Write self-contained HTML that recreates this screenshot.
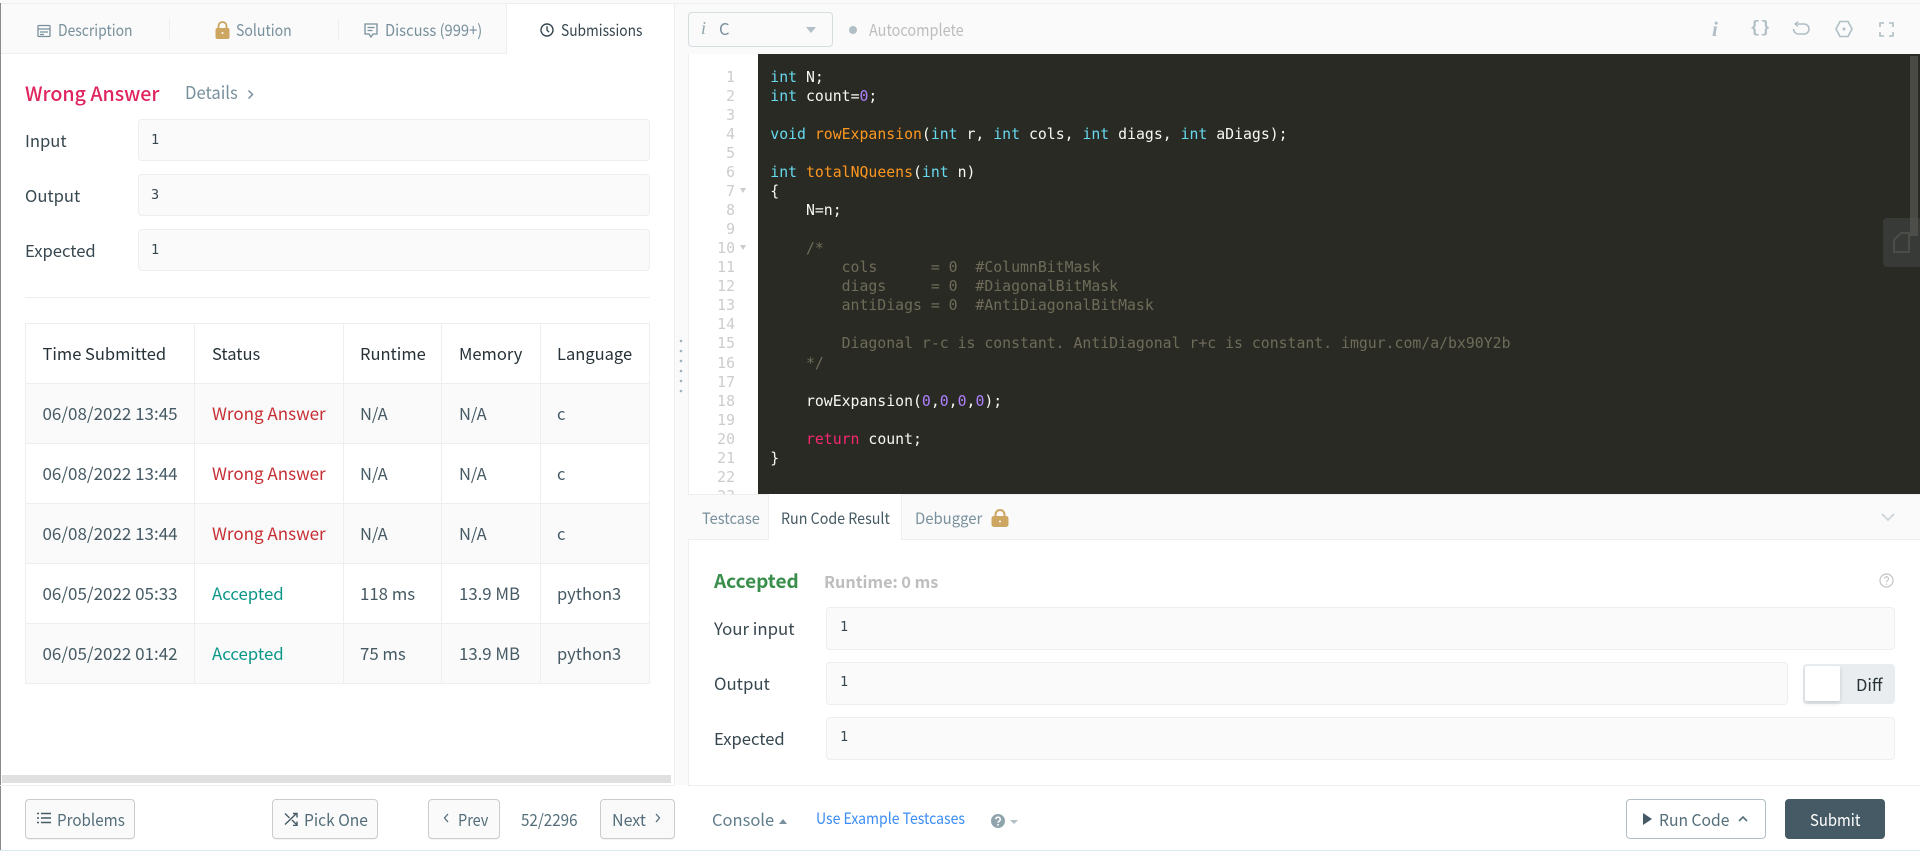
<!DOCTYPE html>
<html><head><meta charset="utf-8"><style>
html,body{margin:0;padding:0;width:1920px;height:851px;overflow:hidden;background:#fff}
body{position:relative;font-family:"Noto Sans CJK SC","Liberation Sans",sans-serif;font-size:16.5px;color:#37474f}
div,span.t,svg,pre{position:absolute}
.t{position:absolute;white-space:nowrap;line-height:24px;height:24px;transform-origin:left center}
.box{position:absolute;background:#fafafa;border:1px solid #eee;border-radius:4px;box-sizing:border-box}
.m{font-family:"DejaVu Sans Mono",monospace;font-size:13.5px;color:#37474f}
.btn{position:absolute;background:#fafafa;border:1px solid #ccc;border-radius:4px;box-sizing:border-box;top:799px;height:40px;box-shadow:0 1px 1px rgba(0,0,0,.05)}
.h{background:#eee;position:absolute}
pre{margin:0;font-family:"DejaVu Sans Mono",monospace;font-size:14.8px;line-height:19.04px;color:#f8f8f2}
.k{color:#66d9ef}.f{color:#fd971f}.n{color:#ae81ff}.r{color:#f92672}.c{color:#6e6c59}
.th{color:#263238}.td{color:#455a64;font-size:17px}.wa{color:#c62f35;font-size:17px}.ac{color:#0a9687;font-size:16.8px}
.na{font-size:16.5px}
</style></head><body>
<!-- backgrounds -->
<div style="left:0;top:0;width:1920px;height:4px;background:#fafafa;border-bottom:1px solid #eee;box-sizing:border-box"></div>
<div style="left:0;top:3px;width:1px;height:847px;background:#8a8a8a"></div>
<div style="left:675px;top:4px;width:13px;height:781px;background:#fafafa"></div>
<div class="h" style="left:674px;top:4px;width:1px;height:781px"></div>
<div class="h" style="left:0;top:785px;width:675px;height:1px"></div>
<div style="left:0;top:850px;width:1920px;height:1px;background:#d8ebf2"></div>

<!-- left tabs -->
<div style="left:1px;top:4px;width:506px;height:50px;background:#fafafa;border-bottom:1px solid #eee;border-right:1px solid #eee;box-sizing:border-box"></div>
<div class="h" style="left:169px;top:19px;width:1px;height:20px"></div>
<div class="h" style="left:338px;top:19px;width:1px;height:20px"></div>
<svg style="left:37px;top:24px" width="14" height="14" viewBox="0 0 14 14" fill="none" stroke="#78909c" stroke-width="1.3"><rect x="1" y="1.5" width="12" height="11" rx="1"/><path d="M1 5h12M3 8h8M3 10.5h4"/></svg>
<span class="t" style="left:58px;top:17px;color:#78909c;font-size:16px;transform:scaleX(.87)">Description</span>
<svg style="left:215px;top:21px" width="15" height="18" viewBox="0 0 15 18"><path d="M3.5 8V5a4 4 0 0 1 8 0v3" fill="none" stroke="#c9a45f" stroke-width="1.8"/><rect x=".5" y="7" width="14" height="11" rx="2" fill="#cda661"/><circle cx="7.5" cy="12" r="1" fill="#fff"/></svg>
<span class="t" style="left:236px;top:17px;color:#78909c;font-size:16px;transform:scaleX(.88)">Solution</span>
<svg style="left:364px;top:23px" width="14" height="16" viewBox="0 0 14 16" fill="none" stroke="#78909c" stroke-width="1.3"><path d="M1 1h12v10H9l-2 3-2-3H1z"/><path d="M3.5 4.5h7M3.5 7.5h5"/></svg>
<span class="t" style="left:385px;top:17px;color:#78909c;font-size:16px;transform:scaleX(.92)">Discuss (999+)</span>
<svg style="left:540px;top:23px" width="14" height="14" viewBox="0 0 14 14" fill="none" stroke="#37474f" stroke-width="1.4"><circle cx="7" cy="7" r="6"/><path d="M7 3.2V7l2 2.2"/></svg>
<span class="t" style="left:561px;top:17px;color:#37474f;font-size:16px;transform:scaleX(.86)">Submissions</span>

<!-- result -->
<span class="t" style="left:25px;top:81px;color:#e0245e;font-weight:500;font-size:19.6px">Wrong Answer</span>
<span class="t" style="left:185px;top:81px;color:#78909c;font-size:17.5px;transform:scaleX(.95)">Details</span>
<svg style="left:247px;top:89px" width="7" height="11" viewBox="0 0 7 11" fill="none" stroke="#78909c" stroke-width="1.5"><path d="M1.5 1.5l4 4-4 4"/></svg>
<span class="t" style="left:25px;top:128px;font-size:16.6px">Input</span>
<span class="t" style="left:25px;top:183px;font-size:16.6px">Output</span>
<span class="t" style="left:25px;top:238px;font-size:16.6px">Expected</span>
<div class="box" style="left:138px;top:119px;width:512px;height:42px"></div>
<div class="box" style="left:138px;top:174px;width:512px;height:42px"></div>
<div class="box" style="left:138px;top:229px;width:512px;height:42px"></div>
<span class="t m" style="left:151px;top:128px">1</span>
<span class="t m" style="left:151px;top:183px">3</span>
<span class="t m" style="left:151px;top:238px">1</span>
<div class="h" style="left:25px;top:297px;width:625px;height:1px"></div>

<!-- table -->
<div style="left:25px;top:383px;width:625px;height:60px;background:#fafafa"></div>
<div style="left:25px;top:503px;width:625px;height:60px;background:#fafafa"></div>
<div style="left:25px;top:623px;width:625px;height:60px;background:#fafafa"></div>
<div class="h" style="left:25px;top:323px;width:625px;height:1px"></div>
<div class="h" style="left:25px;top:383px;width:625px;height:1px"></div>
<div class="h" style="left:25px;top:443px;width:625px;height:1px"></div>
<div class="h" style="left:25px;top:503px;width:625px;height:1px"></div>
<div class="h" style="left:25px;top:563px;width:625px;height:1px"></div>
<div class="h" style="left:25px;top:623px;width:625px;height:1px"></div>
<div class="h" style="left:25px;top:683px;width:625px;height:1px"></div>
<div class="h" style="left:25px;top:323px;width:1px;height:361px"></div>
<div class="h" style="left:194px;top:323px;width:1px;height:361px"></div>
<div class="h" style="left:343px;top:323px;width:1px;height:361px"></div>
<div class="h" style="left:441px;top:323px;width:1px;height:361px"></div>
<div class="h" style="left:540px;top:323px;width:1px;height:361px"></div>
<div class="h" style="left:649px;top:323px;width:1px;height:361px"></div>

<span class="t th" style="left:42.500px;top:341px">Time Submitted</span><span class="t th" style="left:212px;top:341px">Status</span><span class="t th" style="left:360px;top:341px">Runtime</span><span class="t th" style="left:459px;top:341px">Memory</span><span class="t th" style="left:557px;top:341px">Language</span>

<span class="t td" style="left:42.500px;top:401px">06/08/2022 13:45</span><span class="t wa" style="left:212px;top:401px">Wrong Answer</span><span class="t td na" style="left:360px;top:401px">N/A</span><span class="t td na" style="left:459px;top:401px">N/A</span><span class="t td na" style="left:557px;top:401px">c</span>
<span class="t td" style="left:42.500px;top:461px">06/08/2022 13:44</span><span class="t wa" style="left:212px;top:461px">Wrong Answer</span><span class="t td na" style="left:360px;top:461px">N/A</span><span class="t td na" style="left:459px;top:461px">N/A</span><span class="t td na" style="left:557px;top:461px">c</span>
<span class="t td" style="left:42.500px;top:521px">06/08/2022 13:44</span><span class="t wa" style="left:212px;top:521px">Wrong Answer</span><span class="t td na" style="left:360px;top:521px">N/A</span><span class="t td na" style="left:459px;top:521px">N/A</span><span class="t td na" style="left:557px;top:521px">c</span>
<span class="t td" style="left:42.500px;top:581px">06/05/2022 05:33</span><span class="t ac" style="left:212px;top:581px">Accepted</span><span class="t td" style="left:360px;top:581px;font-size:16.800px">118 ms</span><span class="t td" style="left:459px;top:581px;font-size:16.800px">13.9 MB</span><span class="t td na" style="left:557px;top:581px">python3</span>
<span class="t td" style="left:42.500px;top:641px">06/05/2022 01:42</span><span class="t ac" style="left:212px;top:641px">Accepted</span><span class="t td" style="left:360px;top:641px;font-size:16.800px">75 ms</span><span class="t td" style="left:459px;top:641px;font-size:16.800px">13.9 MB</span><span class="t td na" style="left:557px;top:641px">python3</span>

<div style="left:2px;top:775px;width:669px;height:8px;background:#e0e0e0"></div>

<!-- left footer -->
<div class="btn" style="left:25px;width:110px"></div>
<svg style="left:37px;top:812px" width="14" height="12" viewBox="0 0 14 12" fill="none" stroke="#455a64" stroke-width="1.4"><path d="M0 1.5h2M0 6h2M0 10.5h2M4 1.5h10M4 6h10M4 10.5h10"/></svg>
<span class="t" style="left:57px;top:807px;color:#546e7a;transform:scaleX(.92)">Problems</span>
<div class="btn" style="left:272px;width:106px"></div>
<svg style="left:284px;top:812px" width="14" height="14" viewBox="0 0 14 14" fill="none" stroke="#455a64" stroke-width="1.4"><path d="M1 1.5l4.5 4.5M8 8l5 5M1 12.5L12.5 1.5M9 1.500h4v4M13 9.500v4H9"/></svg>
<span class="t" style="left:304px;top:807px;color:#546e7a;transform:scaleX(.945)">Pick One</span>
<div class="btn" style="left:428px;width:72px"></div>
<svg style="left:443px;top:813px" width="7" height="10" viewBox="0 0 7 10" fill="none" stroke="#546e7a" stroke-width="1.3"><path d="M5 1L1.500 5 5 9"/></svg>
<span class="t" style="left:458px;top:807px;color:#546e7a;transform:scaleX(.88)">Prev</span>
<span class="t" style="left:521px;top:807px;color:#546e7a;transform:scaleX(.92)">52/2296</span>
<div class="btn" style="left:600px;width:75px"></div>
<span class="t" style="left:612px;top:807px;color:#546e7a;transform:scaleX(.97)">Next</span>
<svg style="left:654px;top:813px" width="7" height="10" viewBox="0 0 7 10" fill="none" stroke="#546e7a" stroke-width="1.3"><path d="M2 1l3.500 4L2 9"/></svg>

<!-- drag dots -->
<svg style="left:679px;top:338px" width="5" height="56" fill="#9fb2bd"><circle cx="2" cy="3" r="1.3"/><circle cx="2" cy="13" r="1.3"/><circle cx="2" cy="23" r="1.3"/><circle cx="2" cy="33" r="1.3"/><circle cx="2" cy="43" r="1.3"/><circle cx="2" cy="53" r="1.3"/></svg>

<!-- editor toolbar -->
<div style="left:688px;top:4px;width:1232px;height:50px;background:#fafafa"></div>
<div style="left:688px;top:12px;width:145px;height:35px;border:1px solid #d5dde1;border-radius:4px;box-sizing:border-box"></div>
<span class="t" style="left:701px;top:16px;color:#90a4ae;font-family:'Liberation Serif',serif;font-style:italic;font-size:18px">i</span>
<span class="t" style="left:719px;top:16px;color:#78909c">C</span>
<div style="left:806px;top:27px;width:0;height:0;border:5px solid transparent;border-top:6px solid #b0bec5;border-bottom:0"></div>
<div style="left:849px;top:26px;width:8px;height:8px;border-radius:50%;background:#b0bec5"></div>
<span class="t" style="left:869px;top:17px;color:#bdbdbd;transform:scaleX(.875)">Autocomplete</span>
<span class="t" style="left:1712px;top:17px;color:#b0bec5;font-family:'Liberation Serif',serif;font-style:italic;font-size:21px;font-weight:700">i</span>
<span class="t" style="left:1750px;top:17px;color:#b0bec5;font-family:'Liberation Mono',monospace;font-size:17px;font-weight:700">{}</span>
<svg style="left:1792px;top:21px" width="18" height="16" viewBox="0 0 18 16" fill="none" stroke="#b0bec5" stroke-width="1.6"><path d="M3 3h9a5 5 0 0 1 0 10H6a5 5 0 0 1-4.500-5"/><path d="M6 .5L3 3l3 2.500" stroke-width="1.300"/></svg>
<svg style="left:1835px;top:20px" width="18" height="18" viewBox="0 0 18 18" fill="none" stroke="#b0bec5" stroke-width="1.6"><path d="M5 1.500h8l4 7.500-4 7.500H5L1 9z" stroke-linejoin="round"/><circle cx="9" cy="9" r="1.500" fill="#b0bec5" stroke="none"/></svg>
<svg style="left:1879px;top:22px" width="15" height="15" viewBox="0 0 15 15" fill="none" stroke="#b0bec5" stroke-width="1.600"><path d="M1 5V1h4M10 1h4v4M14 10v4h-4M5 14H1v-4"/></svg>

<!-- editor -->
<div style="left:688px;top:54px;width:70px;height:440px;background:#fff;overflow:hidden;border-left:1px solid #eee;box-sizing:border-box">
<pre style="left:0;top:13.800px;width:46px;text-align:right;color:#ccc">1
2
3
4
5
6
7
8
9
10
11
12
13
14
15
16
17
18
19
20
21
22
23</pre>
<div style="left:51px;top:134px;width:0;height:0;border:3px solid transparent;border-top:5px solid #ccc;border-bottom:0"></div>
<div style="left:51px;top:191px;width:0;height:0;border:3px solid transparent;border-top:5px solid #ccc;border-bottom:0"></div>
</div>
<div style="left:758px;top:54px;width:1162px;height:440px;background:#2a2a24;overflow:hidden">
<pre style="left:12.300px;top:13.800px;font-size:14.820px"><span class="k">int</span> N;
<span class="k">int</span> count=<span class="n">0</span>;

<span class="k">void</span> <span class="f">rowExpansion</span>(<span class="k">int</span> r, <span class="k">int</span> cols, <span class="k">int</span> diags, <span class="k">int</span> aDiags);

<span class="k">int</span> <span class="f">totalNQueens</span>(<span class="k">int</span> n)
{
    N=n;

    <span class="c">/*
        cols      = 0  #ColumnBitMask
        diags     = 0  #DiagonalBitMask
        antiDiags = 0  #AntiDiagonalBitMask

        Diagonal r-c is constant. AntiDiagonal r+c is constant. imgur.com/a/bx90Y2b
    */</span>

    rowExpansion(<span class="n">0</span>,<span class="n">0</span>,<span class="n">0</span>,<span class="n">0</span>);

    <span class="r">return</span> count;
}</pre>
<div style="left:1152px;top:2px;width:8px;height:180px;background:#4a4a45"></div>
<div style="left:1125px;top:164px;width:37px;height:49px;background:#383a37;border-radius:4px 0 0 4px"></div>
<div style="left:1152px;top:164px;width:8px;height:18px;background:#4d4e49"></div>
<svg style="left:1135px;top:178px" width="17" height="21" viewBox="0 0 17 21" fill="none" stroke="#4c4d49" stroke-width="2"><path d="M1 8l7-7h8v19H1z" stroke-linejoin="round"/></svg>
</div>

<!-- console tabs -->
<div style="left:688px;top:494px;width:1232px;height:46px;background:#fafafa;border-top:1px solid #eee;border-bottom:1px solid #eee;box-sizing:border-box"></div>
<div style="left:768px;top:494px;width:134px;height:46px;background:#fff;border-left:1px solid #eee;border-right:1px solid #eee;box-sizing:border-box"></div>
<span class="t" style="left:702px;top:506px;color:#78909c;font-size:15.500px;transform:scaleX(.94)">Testcase</span>
<span class="t" style="left:781px;top:506px;color:#455a64;font-size:15.500px;transform:scaleX(.92)">Run Code Result</span>
<span class="t" style="left:915px;top:506px;color:#78909c;font-size:15.500px;transform:scaleX(.96)">Debugger</span>
<svg style="left:991px;top:509px" width="18" height="18" viewBox="0 0 18 18"><path d="M4.500 8V5.500a4.500 4.500 0 0 1 9 0V8" fill="none" stroke="#cda661" stroke-width="2"/><rect x="0.500" y="7" width="17" height="11" rx="2.500" fill="#cda661"/><circle cx="9" cy="12.500" r="1" fill="#fff"/></svg>
<svg style="left:1881px;top:513px" width="14" height="9" viewBox="0 0 14 9" fill="none" stroke="#cfd8dc" stroke-width="2"><path d="M1 1l6 6 6-6"/></svg>

<!-- result panel -->
<div class="h" style="left:688px;top:540px;width:1px;height:246px"></div>
<div class="h" style="left:688px;top:785px;width:1232px;height:1px"></div>
<span class="t" style="left:714px;top:569px;color:#388e4a;font-weight:700;font-size:19px">Accepted</span>
<span class="t" style="left:824px;top:569px;color:#bdbdbd;font-weight:700;font-size:16.200px">Runtime: 0 ms</span>
<svg style="left:1879px;top:573px" width="15" height="15" viewBox="0 0 15 15" fill="none" stroke="#c4c4c4" stroke-width="1.200"><circle cx="7.500" cy="7.500" r="6.500"/><path d="M5.500 5.700a2 2 0 1 1 3 1.800c-.7.400-1 .8-1 1.600M7.500 10.500v1.200"/></svg>
<span class="t" style="left:714px;top:616px;font-size:16.800px">Your input</span>
<span class="t" style="left:714px;top:671px;font-size:16.800px">Output</span>
<span class="t" style="left:714px;top:726px;font-size:16.600px">Expected</span>
<div class="box" style="left:826px;top:607px;width:1069px;height:43px"></div>
<div class="box" style="left:826px;top:662px;width:962px;height:43px"></div>
<div class="box" style="left:826px;top:717px;width:1069px;height:43px"></div>
<span class="t m" style="left:840px;top:615px">1</span>
<span class="t m" style="left:840px;top:670px">1</span>
<span class="t m" style="left:840px;top:725px">1</span>
<div style="left:1803px;top:664px;width:92px;height:40px;background:#e9edf0;border-radius:4px"></div>
<div style="left:1805px;top:666px;width:35px;height:35px;background:#fff;border-radius:2px;box-shadow:0 2px 5px rgba(0,0,0,.14)"></div>
<span class="t" style="left:1856px;top:672px;color:#263238">Diff</span>

<!-- right footer -->
<span class="t" style="left:712px;top:807px;color:#607d8b">Console</span>
<div style="left:779px;top:819px;width:0;height:0;border:4px solid transparent;border-bottom:5px solid #78909c;border-top:0"></div>
<span class="t" style="left:816px;top:806px;color:#3b8cf5;font-size:15.500px;transform:scaleX(.905)">Use Example Testcases</span>
<svg style="left:991px;top:814px" width="14" height="14" viewBox="0 0 14 14"><circle cx="7" cy="7" r="7" fill="#90a4ae"/><path d="M4.800 5.300a2.200 2.200 0 1 1 3.300 1.900c-.7.400-1.100.7-1.100 1.500" fill="none" stroke="#fff" stroke-width="1.500"/><circle cx="7" cy="10.800" r=".9" fill="#fff"/></svg>
<div style="left:1010px;top:820px;width:0;height:0;border:4px solid transparent;border-top:4px solid #b0bec5;border-bottom:0"></div>
<div class="btn" style="left:1626px;width:140px;background:#fff;border-color:#b0bec5;box-shadow:none"></div>
<svg style="left:1643px;top:813px" width="9" height="12" viewBox="0 0 9 12"><path d="M0 0l9 6-9 6z" fill="#455a64"/></svg>
<span class="t" style="left:1659px;top:807px;color:#546e7a;transform:scaleX(.95)">Run Code</span>
<svg style="left:1738px;top:815px" width="10" height="7" viewBox="0 0 10 7" fill="none" stroke="#546e7a" stroke-width="1.600"><path d="M1 6l4-4 4 4"/></svg>
<div style="left:1785px;top:799px;width:100px;height:40px;background:#455a64;border-radius:4px"></div>
<span class="t" style="left:1810px;top:807px;color:#fff;transform:scaleX(.9)">Submit</span>
</body></html>
